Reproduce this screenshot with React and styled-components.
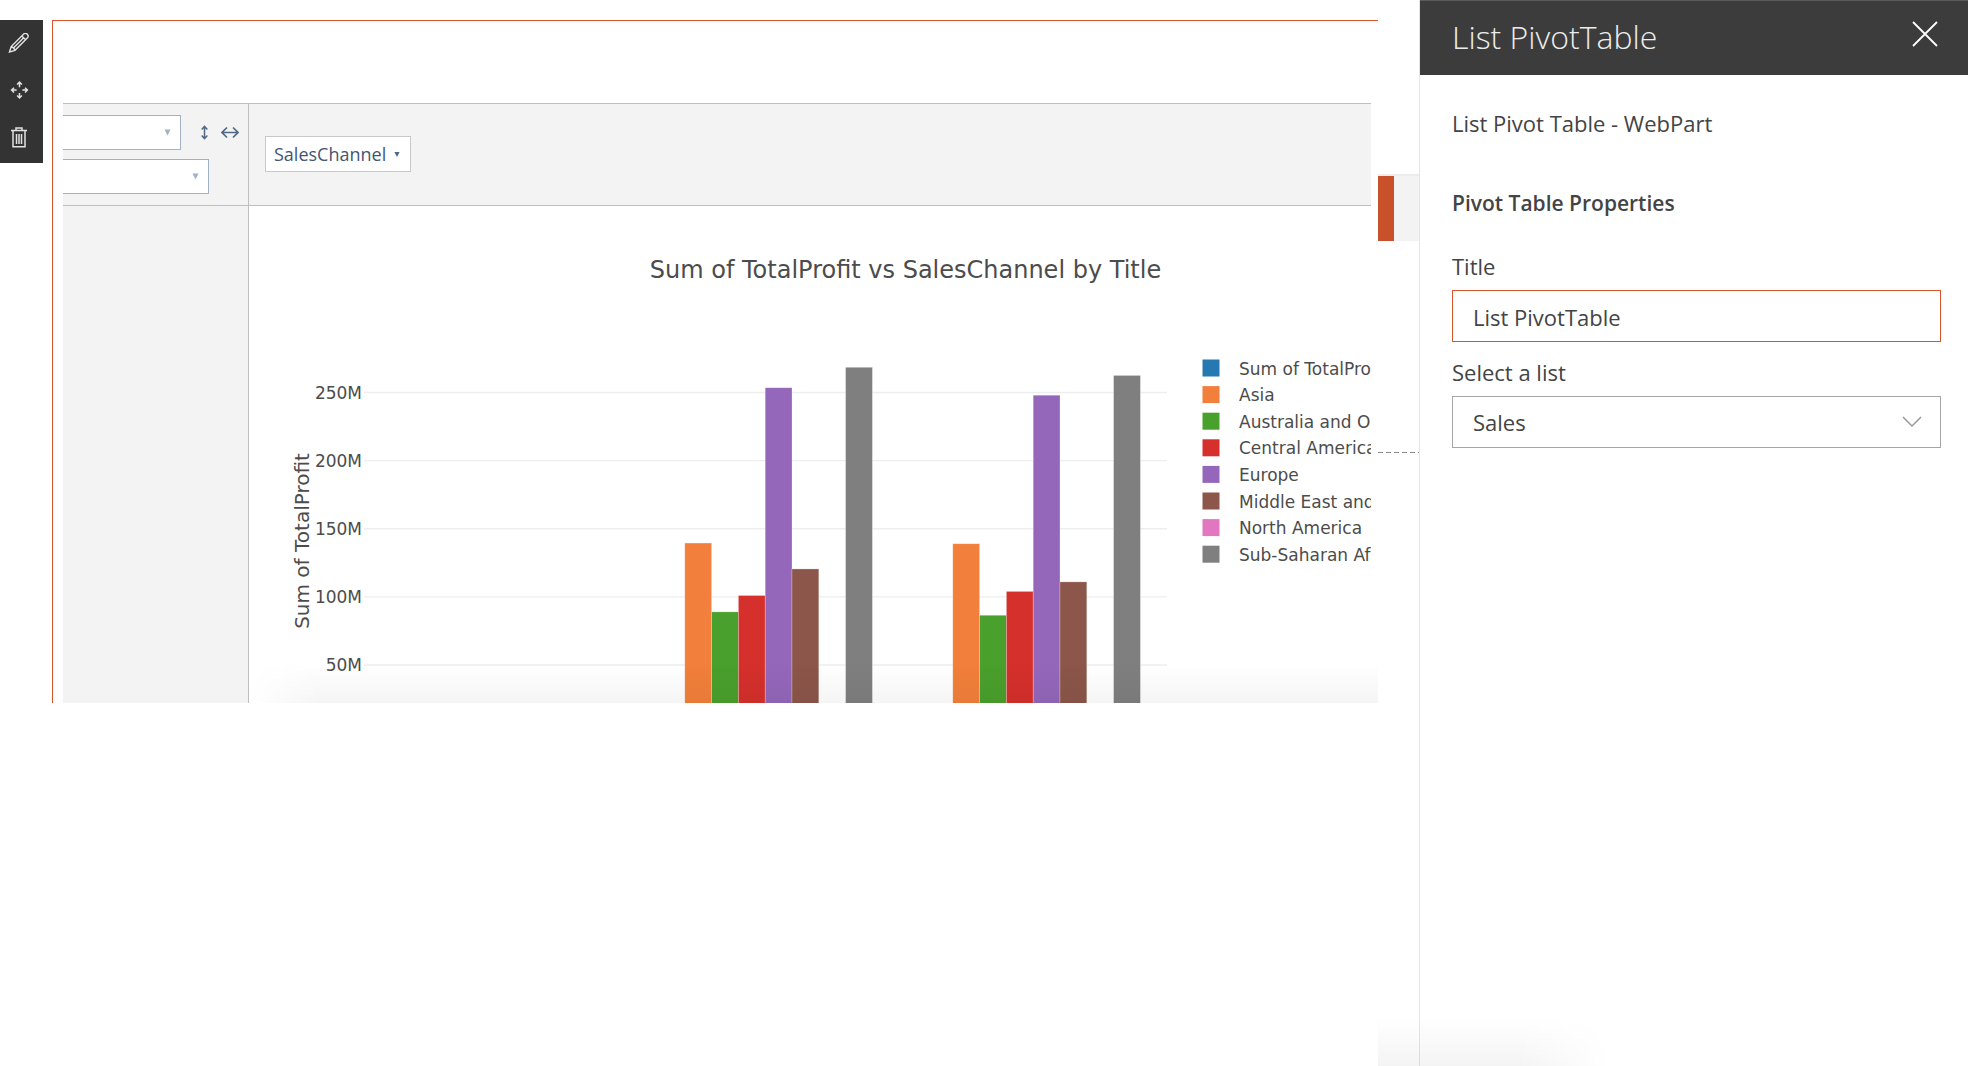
import React from 'react';
import styled, { createGlobalStyle } from 'styled-components';

const UI_FONT = '"Open Sans", "Noto Sans", sans-serif';
const CHART_FONT = '"DejaVu Sans", Verdana, sans-serif';

const GlobalStyle = createGlobalStyle`
  *, *::before, *::after { box-sizing: border-box; }
  body { margin: 0; background: #fff; color: #444; font-family: ${UI_FONT}; }
  button, input, select { font: inherit; color: inherit; }
`;

const Page = styled.div`
  position: relative;
  display: flex;
  min-height: 100vh;
  overflow: hidden;
`;

const Main = styled.main`
  flex: 1;
  min-width: 0;
  display: flex;
  align-items: flex-start;
  padding-top: 20px;
`;

const Toolbar = styled.div`
  flex: none;
  width: 43px;
  padding: 0 0 2px;
  display: flex;
  flex-direction: column;
  background: #333;
`;

const ToolButton = styled.button`
  height: 47px;
  padding: 0 5px 0 0;
  border: 0;
  background: none;
  color: #e2e2e2;
  display: flex;
  align-items: center;
  justify-content: center;
`;

const WebPart = styled.section`
  position: relative;
  flex: 1;
  min-width: 0;
  margin-left: 9px;
  padding: 82px 7px 0 10px;
  border: solid #d9532c;
  border-width: 1px 0 0 1px;
  overflow: hidden;
`;

const Pivot = styled.div`
  display: grid;
  grid-template-columns: 186px minmax(0, 1fr);
  grid-template-rows: 103px auto;
`;

const Cell = styled.div`
  min-width: 0;
  background: #f3f3f3;
  border: solid #bfbfbf;
  border-width: ${(p) => (p.$top ? '1px' : '0')} ${(p) => (p.$side ? '1px' : '0')} ${(p) => (p.$top ? '1px' : '0')} 0;
`;

const Aggregators = styled(Cell)`
  padding: 11px 9px 0 0;
  display: flex;
  flex-direction: column;
  gap: 9px;
`;

const AggregatorRow = styled.div`
  display: flex;
  align-items: center;
  justify-content: space-between;
`;

const Picker = styled.label`
  flex: none;
  display: grid;
  align-items: center;
  width: ${(p) => p.$width}px;

  & > * { grid-area: 1 / 1; }
  & > svg { justify-self: end; margin-right: 10px; pointer-events: none; }
`;

const PickerSelect = styled.select`
  width: 100%;
  height: 35px;
  padding: 0 24px 0 8px;
  appearance: none;
  border: 1px solid #a2b1c6;
  border-left: 0;
  border-radius: 0;
  background: #fff;
`;

const SortButton = styled.button`
  padding: 0;
  border: 0;
  background: none;
  display: flex;
  color: #506784;
`;

const SortButtons = styled.div`
  display: flex;
  align-items: center;
  gap: 12px;
`;

const Columns = styled(Cell)`
  display: flex;
  align-items: flex-start;
  padding: 32px 16px;
`;

const Attribute = styled.button`
  height: 36px;
  padding: 0 10px 0 8px;
  border: 1px solid #c8c8c8;
  background: #fff;
  color: #425673;
  font-size: 18px;
  display: flex;
  align-items: center;
  gap: 8px;
`;

const ChartCell = styled.div`
  min-width: 0;
  height: 497px;
  overflow: hidden;

  & > svg { display: block; }
`;

const ChartShade = styled.div`
  position: absolute;
  left: 196px;
  right: 0;
  bottom: 0;
  height: 40px;
  background: linear-gradient(to bottom, rgba(0, 0, 0, 0), rgba(0, 0, 0, 0.04));
  mask-image: linear-gradient(to right, transparent, #000 70px);
  pointer-events: none;
`;

const Sliver = styled.div`
  flex: none;
  width: 41px;
  padding-top: 174px;
`;

const SliverBlock = styled.div`
  height: 67px;
  margin-bottom: 211px;
  border-top: 2px solid #ececec;
  background: linear-gradient(to right, #c8502b 16px, #f3f3f3 16px);
`;

const SliverRule = styled.div`
  height: 1px;
  background: repeating-linear-gradient(to right, #8a8a8a 0 5px, transparent 5px 8px);
`;

const Panel = styled.aside`
  flex: none;
  width: 549px;
  border-left: 1px solid #e6e6e6;
`;

const PanelHeader = styled.header`
  height: 75px;
  padding: 0 30px 8px 32px;
  border-top: 1px solid #5c5c5c;
  background: #3c3c3c;
  color: #ececec;
  display: flex;
  align-items: center;
  justify-content: space-between;
`;

const PanelTitle = styled.h1`
  margin: 0;
  padding-top: 6px;
  font-size: 32px;
  line-height: 44px;
  font-weight: 300;
`;

const CloseButton = styled.button`
  padding: 0;
  border: 0;
  background: none;
  display: flex;
`;

const PanelBody = styled.form`
  padding: 34px 27px 0 32px;
  display: flex;
  flex-direction: column;
  font-size: 22px;
  line-height: 28px;
`;

const Description = styled.p`
  margin: 0 0 52px;
`;

const GroupTitle = styled.h2`
  margin: 0 0 35px;
  font-size: 21px;
  line-height: 28px;
  font-weight: 600;
`;

const Field = styled.div`
  display: flex;
  flex-direction: column;
  gap: 10px;
  margin-bottom: 16px;
`;

const TextInput = styled.input`
  width: 100%;
  height: 52px;
  padding: 2px 20px 0;
  border: 1px solid #d9532c;
  border-radius: 0;
  outline: 0;
  background: #fff;
`;

const ListPicker = styled.div`
  display: grid;
  align-items: center;

  & > * { grid-area: 1 / 1; }
  & > svg { justify-self: end; margin-right: 19px; pointer-events: none; }
`;

const ListSelect = styled.select`
  width: 100%;
  height: 52px;
  padding: 0 50px 0 20px;
  appearance: none;
  border: 1px solid #a6a6a6;
  border-radius: 0;
  background: #fff;
`;

const PageShade = styled.div`
  position: absolute;
  right: 350px;
  bottom: 0;
  width: 240px;
  height: 48px;
  background: linear-gradient(to bottom, rgba(0, 0, 0, 0), rgba(0, 0, 0, 0.045));
  mask-image: linear-gradient(to left, transparent 10px, #000 100px);
  pointer-events: none;
`;

const SERIES = [
  { name: 'Sum of TotalProfit', color: '#2678b2' },
  { name: 'Asia', color: '#f27f3b' },
  { name: 'Australia and Oceania', color: '#4aa02c' },
  { name: 'Central America and the Caribbean', color: '#d5302c' },
  { name: 'Europe', color: '#9467bb' },
  { name: 'Middle East and North Africa', color: '#8c564a' },
  { name: 'North America', color: '#e276c0' },
  { name: 'Sub-Saharan Africa', color: '#7f7f7f' },
];

const TICKS = [250, 200, 150, 100, 50];

const GROUPS = [
  { x: 409, values: [0, 139.5, 89, 101, 253.5, 120.5, 0, 268.5] },
  { x: 677, values: [0, 139, 86.5, 104, 248, 111, 0, 262.5] },
];

const BAR = 26.8;
const yOf = (value) => 459 - (value - 50) * 1.3625;

function Triangle({ color, small }) {
  return (
    <svg width={small ? 6 : 7} height="7" viewBox="0 0 7 7" aria-hidden="true">
      <path d="M0.500 0.500h6L3.500 6.500z" fill={color} />
    </svg>
  );
}

function Chart() {
  return (
    <svg width="1122" height="497" fontFamily={CHART_FONT} fill="#4c4c4c" role="img" aria-label="Sum of TotalProfit vs SalesChannel by Title">
      <text x="656.5" y="72" fontSize="24" textAnchor="middle">Sum of TotalProfit vs SalesChannel by Title</text>
      <text transform="translate(60 335) rotate(-90)" fontSize="20" textAnchor="middle">Sum of TotalProfit</text>
      {TICKS.map((t) => (
        <g key={t}>
          <path d={`M115 ${yOf(t)}H918`} stroke="#eee" strokeWidth="1.4" />
          <text x="113" y={yOf(t) + 6} fontSize="17" textAnchor="end">{t}M</text>
        </g>
      ))}
      {GROUPS.map((g) =>
        g.values.map((v, i) =>
          v > 0 ? (
            <rect key={`${g.x}-${i}`} x={g.x + i * BAR} y={yOf(v)} width={BAR} height={520 - yOf(v)} fill={SERIES[i].color} stroke="#fff" strokeOpacity="0.35" strokeWidth="0.7" />
          ) : null
        )
      )}
      {SERIES.map((s, i) => (
        <g key={s.name}>
          <rect x="953.5" y={153.5 + i * 26.6} width="17" height="17" fill={s.color} />
          <text x="990" y={168.5 + i * 26.6} fontSize="17">{s.name}</text>
        </g>
      ))}
    </svg>
  );
}

export default function App() {
  return (
    <Page>
      <GlobalStyle />
      <Main>
        <Toolbar>
          <ToolButton type="button" aria-label="Edit web part">
            <svg width="22" height="22" viewBox="0 1.500 22 22" fill="none" stroke="currentColor" strokeWidth="1.4">
              <path d="M1.5 20.5L3.2 15 15.7 2.5a2.7 2.7 0 0 1 3.8 3.8L7 18.8zM13.8 4.4l3.8 3.8M3.2 15.2q2.8.6 3.6 3.6M5 17L15.7 6.3" />
            </svg>
          </ToolButton>
          <ToolButton type="button" aria-label="Move web part">
            <svg width="19" height="20" viewBox="0 1 20 20" fill="none" stroke="currentColor" strokeWidth="1.6">
              <path d="M10 7V1.500M7.500 4.200l2.500-2.500 2.500 2.500M10 13v5.500M7.500 15.800l2.500 2.500 2.500-2.500M7 10H1.500M4.200 7.500L1.700 10l2.500 2.500M13 10h5.500M15.800 7.500l2.500 2.500-2.500 2.500" />
            </svg>
          </ToolButton>
          <ToolButton type="button" aria-label="Delete web part">
            <svg width="16" height="21" viewBox="0 0 16 21" fill="none" stroke="currentColor" strokeWidth="1.5">
              <path d="M0 3.5h16M5 3.5V1h6v2.500M2 3.500V19.800h12V3.500M5.500 7v10M8 7v10M10.500 7v10" />
            </svg>
          </ToolButton>
        </Toolbar>

        <WebPart>
          <Pivot>
            <Aggregators $top $side>
              <AggregatorRow>
                <Picker $width={118}>
                  <PickerSelect aria-label="Aggregator" />
                  <Triangle color="#a2b1c6" />
                </Picker>
                <SortButtons>
                  <SortButton type="button" aria-label="Row order">
                    <svg width="9" height="15" viewBox="0 0 9 17" fill="none" stroke="currentColor" strokeWidth="1.700">
                      <path d="M4.500 2v13M1.300 5l3.200-3.500L7.700 5M1.300 12l3.200 3.500L7.700 12" />
                    </svg>
                  </SortButton>
                  <SortButton type="button" aria-label="Column order">
                    <svg width="18" height="13" viewBox="0 0 18 13" fill="none" stroke="currentColor" strokeWidth="1.700">
                      <path d="M1.500 6.500h15M6 1.500l-5 5 5 5M12 1.500l5 5-5 5" />
                    </svg>
                  </SortButton>
                </SortButtons>
              </AggregatorRow>
              <Picker $width={146}>
                <PickerSelect aria-label="Value attribute" />
                <Triangle color="#a2b1c6" />
              </Picker>
            </Aggregators>
            <Columns $top>
              <Attribute type="button">
                SalesChannel
                <Triangle color="#506784" small />
              </Attribute>
            </Columns>
            <Cell $side />
            <ChartCell>
              <Chart />
            </ChartCell>
          </Pivot>
          <ChartShade />
        </WebPart>
      </Main>

      <Sliver>
        <SliverBlock />
        <SliverRule />
      </Sliver>

      <Panel>
        <PanelHeader>
          <PanelTitle>List PivotTable</PanelTitle>
          <CloseButton type="button" aria-label="Close">
            <svg width="26" height="26" viewBox="0 0 26 26" fill="none" stroke="#fff" strokeWidth="1.800">
              <path d="M1 1l24 24M25 1L1 25" />
            </svg>
          </CloseButton>
        </PanelHeader>
        <PanelBody>
          <Description>List Pivot Table - WebPart</Description>
          <GroupTitle>Pivot Table Properties</GroupTitle>
          <Field>
            <label htmlFor="title">Title</label>
            <TextInput id="title" type="text" defaultValue="List PivotTable" />
          </Field>
          <Field>
            <label htmlFor="list">Select a list</label>
            <ListPicker>
              <ListSelect id="list" defaultValue="Sales">
                <option>Sales</option>
              </ListSelect>
              <svg width="20" height="12" viewBox="0 0 20 12" fill="none" stroke="#999" strokeWidth="1.500" aria-hidden="true">
                <path d="M1 1l9 9 9-9" />
              </svg>
            </ListPicker>
          </Field>
        </PanelBody>
      </Panel>
      <PageShade />
    </Page>
  );
}
